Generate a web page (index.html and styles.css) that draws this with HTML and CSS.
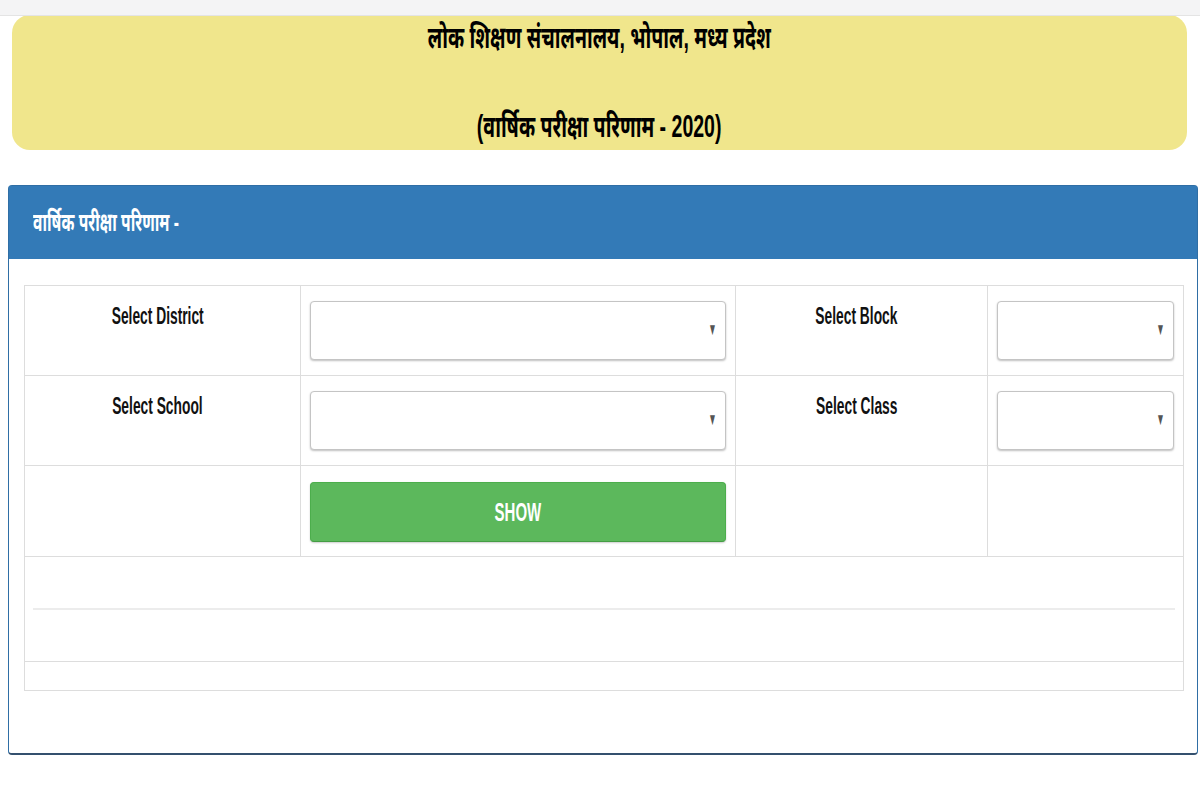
FILE: index.html
```html
<!DOCTYPE html>
<html lang="hi">
<head>
    <meta charset="UTF-8">
    <meta name="viewport" content="width=device-width">
    <title>वार्षिक परीक्षा परिणाम - 2020</title>
    <link rel="stylesheet" href="styles.css">
</head>
<body>
<!--顶部浏览器条-->
<div class="topbar"></div>

<!--标题区域-->
<div class="banner">
    <div class="line1"><span class="sq">लोक शिक्षण संचालनालय, भोपाल, मध्य प्रदेश</span></div>
    <div class="line2"><span class="sq">(वार्षिक परीक्षा परिणाम - 2020)</span></div>
</div>

<!--面板-->
<div class="panel">
    <div class="panel-heading"><span class="sq sq-left">वार्षिक परीक्षा परिणाम -</span></div>
    <div class="panel-body">
        <table class="grid">
            <colgroup>
                <col class="c1">
                <col class="c2">
                <col class="c3">
                <col class="c4">
            </colgroup>
            <tr>
                <td class="label"><span class="sq">Select District</span></td>
                <td><div class="pick"><select></select></div></td>
                <td class="label"><span class="sq">Select Block</span></td>
                <td><div class="pick"><select></select></div></td>
            </tr>
            <tr>
                <td class="label"><span class="sq">Select School</span></td>
                <td><div class="pick"><select></select></div></td>
                <td class="label"><span class="sq">Select Class</span></td>
                <td><div class="pick"><select></select></div></td>
            </tr>
            <tr>
                <td></td>
                <td><button class="btn-show"><span class="sq">SHOW</span></button></td>
                <td></td>
                <td></td>
            </tr>
            <tr class="result">
                <td colspan="4"><div class="divider"></div></td>
            </tr>
            <tr class="foot">
                <td colspan="4"></td>
            </tr>
        </table>
    </div>
</div>
</body>
</html>
```

FILE: styles.css
```css
*{
    box-sizing: border-box;
}
body{
    margin: 0;
    background: #fff;
    font-family: "Liberation Sans", Arial, "Noto Sans Devanagari", "Lohit Devanagari", "Noto Sans", sans-serif;
    color: #111;
}

/* 文字被横向压缩 */
.sq{
    display: inline-block;
    transform: scaleX(.6);
    transform-origin: center;
    white-space: nowrap;
}
.sq-left{
    transform-origin: left center;
}

.topbar{
    height: 16px;
    background: #f4f4f5;
    border-bottom: 1px solid #e4e4e4;
    position: relative;
    z-index: 1;
}

.banner{
    margin: -1px 13px 0 12px;
    height: 135px;
    background: #f0e68c;
    border-radius: 18px;
    text-align: center;
    font-weight: bold;
    font-size: 31px;
    color: #000;
}
.banner .sq{
    transform: scaleX(.63);
}
.banner .line1{
    line-height: 46px;
}
.banner .line2{
    margin-top: 43px;
    line-height: 46px;
}

.panel{
    margin: 35px 2px 0 8px;
    border: 1px solid #2f6ea5;
    border-bottom: 2px solid #34506e;
    border-radius: 4px;
}
.panel-heading{
    height: 73px;
    line-height: 73px;
    padding-left: 24px;
    background: #337ab7;
    color: #fff;
    font-size: 26px;
    font-weight: bold;
}
.panel-body{
    padding: 26px 13px 62px 15px;
}

.grid{
    width: 100%;
    border-collapse: collapse;
    table-layout: fixed;
}
.grid .c1{ width: 276px; }
.grid .c2{ width: 435px; }
.grid .c3{ width: 252px; }
.grid td{
    border: 1px solid #ddd;
    padding: 15px 9px 14px;
    vertical-align: top;
    height: 90px;
}
.grid td.label{
    text-align: center;
    font-weight: bold;
    font-size: 23px;
    line-height: 32px;
    padding: 14px 18px 14px 8px;
}

.pick{
    position: relative;
}
.pick select{
    appearance: none;
    -webkit-appearance: none;
    width: 100%;
    height: 59px;
    background: #fff;
    border: 1px solid #c4c4c4;
    border-radius: 4px;
    box-shadow: 0 1px 2px rgba(0,0,0,.25);
}
.pick::after{
    content: "▼";
    position: absolute;
    right: 5px;
    top: 19px;
    font-size: 17px;
    color: #555;
    transform: scaleX(.5);
    pointer-events: none;
}

.btn-show{
    display: block;
    width: 100%;
    height: 60px;
    margin-top: 1px;
    background: #5cb85c;
    border: 1px solid #4cae4c;
    border-bottom-color: #449d44;
    border-radius: 4px;
    color: #fff;
    font-family: inherit;
    font-size: 25px;
    font-weight: bold;
    box-shadow: 0 1px 2px rgba(0,0,0,.2);
}

.grid .result td{
    height: 105px;
    padding: 0 8px;
    vertical-align: middle;
}
.divider{
    border-top: 2px solid #ececec;
}
.grid .foot td{
    height: 29px;
    padding: 0;
}
```
